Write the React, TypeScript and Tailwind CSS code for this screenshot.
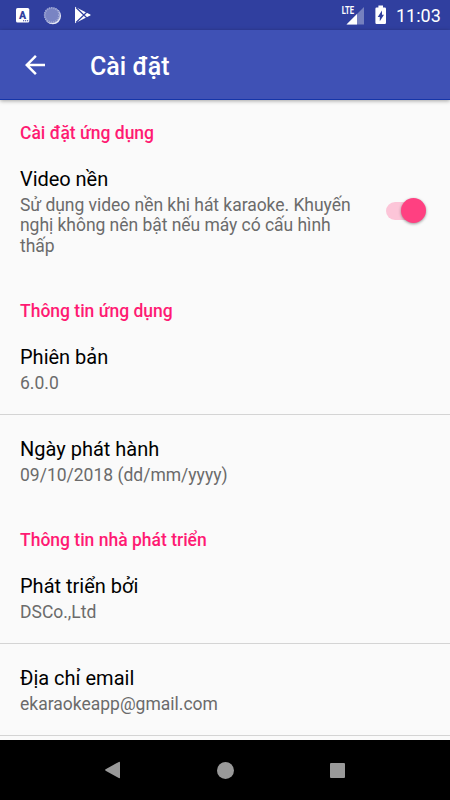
import type { ReactNode } from "react";

interface PreferenceProps {
  title: string;
  summary: string;
  divider?: boolean;
  children?: ReactNode;
}

function StatusBar() {
  return (
    <div className="flex h-[30px] shrink-0 items-center justify-between bg-[#303f9f] pr-[10px] pl-4 text-white">
      <div className="flex items-center">
        <svg width="14" height="15" viewBox="0 0 14 15">
          <rect width="13.3" height="14.6" rx="1.6" fill="#fff" />
          <text x="6.6" y="10.8" textAnchor="middle" fill="#303f9f" fontFamily="Roboto, sans-serif" fontSize="10.5" fontWeight="900">A</text>
          <path d="M7 12.7h1.2M9 12.7h1.2M11 12.7h1.2" stroke="#303f9f" strokeWidth="1.1" />
        </svg>
        <svg className="ml-[13px]" width="19" height="19" viewBox="0 0 19 19">
          <circle cx="9.8" cy="10.1" r="8.2" fill="#e8eaf6" />
          <circle cx="8.9" cy="9.1" r="7.9" fill="#7984c3" />
          <circle cx="8.9" cy="9.1" r="7.2" fill="none" stroke="#a3abd6" strokeWidth="1.8" strokeDasharray="1.1 1.1" />
        </svg>
        <svg className="ml-[12px]" width="18" height="18" viewBox="0 0 18 18">
          <path d="M1 .8 12.2 6.6 17 9l-4.8 2.4L1 17.2Z" fill="#fff" />
          <path d="m2 1.500 11 10.500M2 16.500 13 6" stroke="#303f9f" strokeWidth="1.200" />
          <path d="m12 9 1.600-1.600L16.300 9l-2.700 1.600Z" fill="#fff" />
        </svg>
      </div>
      <div className="flex items-center">
        <svg className="overflow-visible" width="24" height="20" viewBox="0 0 24 20">
          <path d="M23 2v17.5H5.5Z" fill="#7580be" />
          <path d="M16 9v10.5H5.5Z" fill="#fff" />
          <path d="M0 0h13.5v9.5H0Z" fill="#303f9f" />
          <text x="0.8" y="9" fill="#fff" fontFamily="Roboto, sans-serif" fontSize="11" fontWeight="700" textLength="12.3" lengthAdjust="spacingAndGlyphs">LTE</text>
        </svg>
        <svg className="ml-[10px]" width="12" height="20" viewBox="0 0 12 20">
          <path d="M3.4.5H8v2h1.800q1.200 0 1.200 1.200v14.100q0 1.200-1.200 1.200H1.600Q.4 19 .4 17.800V3.700q0-1.200 1.200-1.200h1.800Z" fill="#fff" />
          <path d="M7 5.500v4.200h2L4.800 16.200V12H2.700Z" fill="#303f9f" />
        </svg>
        <span className="ml-[9px] w-[44px] pt-px text-[18px] leading-[30px] whitespace-nowrap">11:03</span>
      </div>
    </div>
  );
}

function Toolbar() {
  return (
    <header className="z-10 flex h-[70px] shrink-0 items-center border-b border-[#1535a8] bg-[#3f51b5] pl-5 text-white shadow-[0_1px_4px_rgba(0,0,0,0.35)]">
      <svg className="mt-px" width="30" height="30" viewBox="0 0 24 24" fill="currentColor">
        <path d="M20 11H7.83l5.59-5.59L12 4l-8 8 8 8 1.41-1.41L7.83 13H20v-2z" />
      </svg>
      <h1 className="ml-10 pt-1 text-[25px] leading-[30px] font-medium">Cài đặt</h1>
    </header>
  );
}

function SectionTitle({ children }: { children: ReactNode }) {
  return (
    <h2 className="h-[45px] pt-[23px] pl-5 text-[17.5px] leading-[21px] font-medium text-[#ff1a73]">
      {children}
    </h2>
  );
}

function Preference({ title, summary, divider, children }: PreferenceProps) {
  return (
    <div className={`flex min-h-[92px] pl-5 ${divider ? "items-center border-b border-[#d4d4d4]" : children ? "items-center" : "items-start"}`}>
      <div className={`flex-1 ${children ? "pt-[22px] pb-[22.5px] tracking-[-0.04px]" : divider ? "pt-[22px] pb-[20.5px]" : "pt-[21.5px]"}`}>
        <p className="text-[20px] leading-6 text-black">{title}</p>
        <p className="mt-[4px] text-[17.5px] leading-[20.3px] text-[#6b6b6b]">{summary}</p>
      </div>
      {children}
    </div>
  );
}

function Switch() {
  return (
    <div className="mr-[23px] mb-[2px] ml-[20px] flex h-[26px] w-[41px] items-center">
      <div className="h-[18px] w-[32px] shrink-0 rounded-full bg-[#fcc5d8]" />
      <div className="-ml-[17px] size-[25px] shrink-0 rounded-full bg-[#ff4081] shadow-[0_1px_3px_rgba(0,0,0,0.4)]" />
    </div>
  );
}

function NavigationBar() {
  return (
    <nav className="flex h-[60px] shrink-0 items-center justify-center gap-[96px] bg-black">
      <svg width="16" height="18" viewBox="0 0 16 18" fill="#999">
        <path d="M13.8.9Q15 .3 15 1.5v15q0 1.2-1.2.6L.6 9.7q-1-.7 0-1.4Z" />
      </svg>
      <div className="size-[17px] rounded-full bg-[#999]" />
      <div className="size-[15px] rounded-[1px] bg-[#999]" />
    </nav>
  );
}

export default function App() {
  return (
    <div className="flex h-[800px] w-[450px] flex-col overflow-hidden bg-[#fafafa] font-[Roboto,sans-serif]">
      <StatusBar />
      <Toolbar />
      <main className="min-h-0 flex-1 overflow-hidden">
        <SectionTitle>Cài đặt ứng dụng</SectionTitle>
        <Preference
          title="Video nền"
          summary="Sử dụng video nền khi hát karaoke. Khuyến nghị không nên bật nếu máy có cấu hình thấp"
        >
          <Switch />
        </Preference>

        <SectionTitle>Thông tin ứng dụng</SectionTitle>
        <Preference title="Phiên bản" summary="6.0.0" divider />
        <Preference title="Ngày phát hành" summary="09/10/2018 (dd/mm/yyyy)" />

        <SectionTitle>Thông tin nhà phát triển</SectionTitle>
        <Preference title="Phát triển bởi" summary="DSCo.,Ltd" divider />
        <Preference title="Địa chỉ email" summary="ekaraokeapp@gmail.com" divider />
      </main>
      <NavigationBar />
    </div>
  );
}
